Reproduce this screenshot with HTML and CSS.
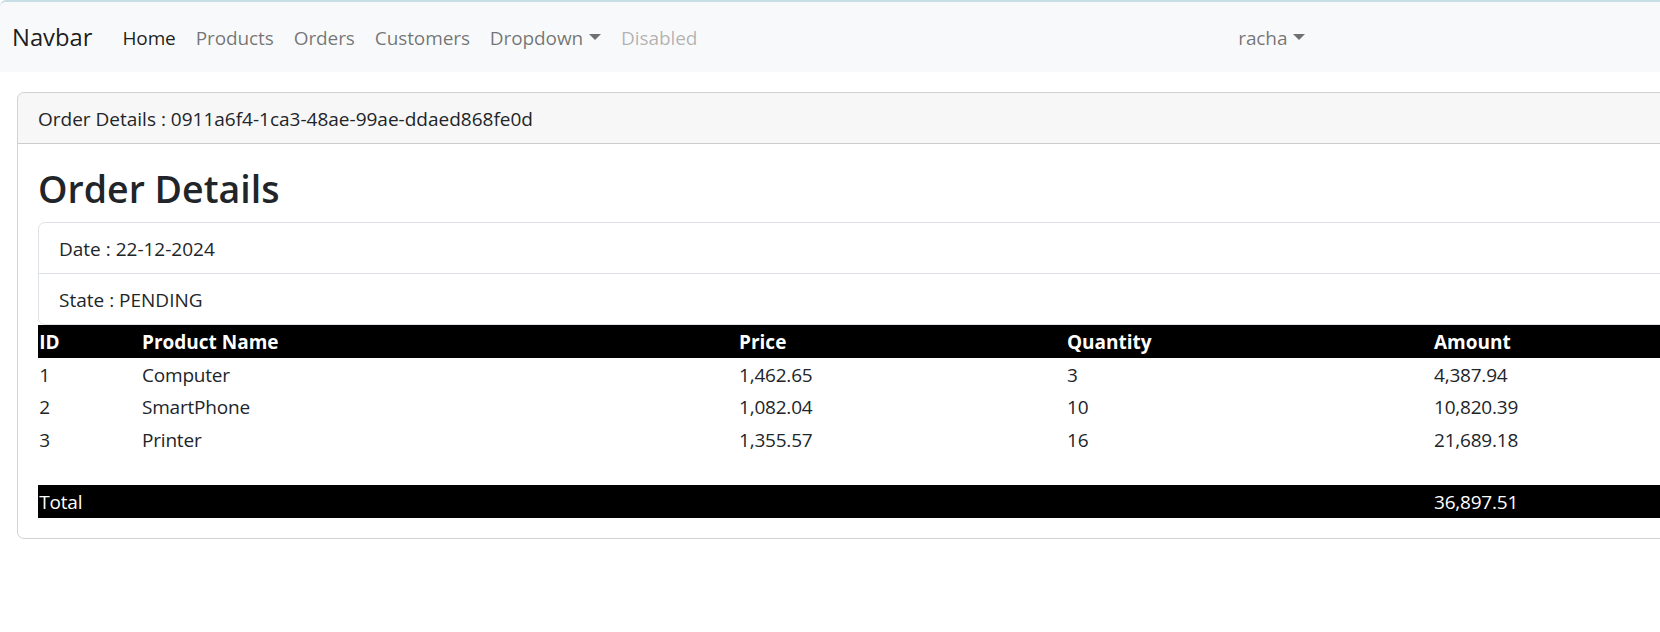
FILE: index.html
```html
<!DOCTYPE html>
<html lang="en">
<head>
<meta charset="utf-8">
<title>Order Details</title>
<link rel="stylesheet" href="styles.css">
</head>
<body>
<nav class="navbar">
  <a class="brand" href="#">Navbar</a>
  <ul class="nav">
    <li><a class="nav-link active" href="#">Home</a></li>
    <li><a class="nav-link" href="#">Products</a></li>
    <li><a class="nav-link" href="#">Orders</a></li>
    <li><a class="nav-link" href="#">Customers</a></li>
    <li><a class="nav-link dropdown-toggle" href="#">Dropdown</a></li>
    <li><a class="nav-link disabled" href="#">Disabled</a></li>
  </ul>
  <ul class="nav user-nav">
    <li><a class="nav-link dropdown-toggle" href="#">racha</a></li>
  </ul>
</nav>

<div class="card">
  <div class="card-header">Order Details : 0911a6f4-1ca3-48ae-99ae-ddaed868fe0d</div>
  <div class="card-body">
    <h1 class="title">Order Details</h1>
    <ul class="list-group">
      <li class="list-item">Date : 22-12-2024</li>
      <li class="list-item">State : PENDING</li>
    </ul>
    <table class="items">
      <colgroup>
        <col class="c-id"><col class="c-name"><col class="c-price"><col class="c-qty"><col class="c-amount">
      </colgroup>
      <thead>
        <tr class="dark"><th>ID</th><th>Product Name</th><th>Price</th><th>Quantity</th><th>Amount</th></tr>
      </thead>
      <tbody>
        <tr><td>1</td><td>Computer</td><td>1,462.65</td><td>3</td><td>4,387.94</td></tr>
        <tr><td>2</td><td>SmartPhone</td><td>1,082.04</td><td>10</td><td>10,820.39</td></tr>
        <tr><td>3</td><td>Printer</td><td>1,355.57</td><td>16</td><td>21,689.18</td></tr>
        <tr class="spacer"><td colspan="5"></td></tr>
      </tbody>
      <tfoot>
        <tr class="dark total"><td>Total</td><td></td><td></td><td></td><td>36,897.51</td></tr>
      </tfoot>
    </table>
  </div>
</div>
</body>
</html>
```

FILE: styles.css
```css
* { box-sizing: border-box; }

html, body {
  margin: 0;
  overflow: hidden;
}

body {
  font-family: "Open Sans", "Noto Sans", sans-serif;
  font-size: 19px;
  line-height: 30px;
  color: #212529;
  background: #fff;
}

a { text-decoration: none; }

.navbar {
  display: flex;
  align-items: center;
  height: 72px;
  padding: 11px 12px 9px;
  background: #f8f9fa;
  border-top: 2px solid #c8dee5;
  border-top-left-radius: 6px;
}

.brand {
  font-size: 23.75px;
  line-height: 37.5px;
  padding: 6.25px 0;
  margin-right: 20px;
  color: rgba(0, 0, 0, 0.9);
}

.nav {
  display: flex;
  list-style: none;
  margin: 0;
  padding: 0;
}

.nav-link {
  display: block;
  padding: 10px;
  font-size: 19px;
  letter-spacing: -0.1px;
  line-height: 30px;
  color: rgba(0, 0, 0, 0.55);
}

.nav-link.active { color: rgba(0, 0, 0, 0.9); }
.nav-link.disabled { color: rgba(0, 0, 0, 0.3); }

.dropdown-toggle::after {
  content: "";
  display: inline-block;
  margin-left: 6px;
  vertical-align: 5px;
  border-top: 6px solid;
  border-right: 6px solid transparent;
  border-left: 6px solid transparent;
  border-bottom: 0;
}

.user-nav { margin-left: 521px; }

.card {
  width: 1800px;
  margin: 20px 0 0 17px;
  border: 1px solid rgba(0, 0, 0, 0.175);
  border-radius: 7px;
}

.card-header {
  padding: 11px 20px 9px;
  background: rgba(0, 0, 0, 0.03);
  border-bottom: 1px solid rgba(0, 0, 0, 0.175);
  border-radius: 6px 6px 0 0;
}

.card-body { padding: 20px; }

.title {
  margin: 0 0 10px;
  padding-top: 1px;
  height: 48px;
  font-size: 37.5px;
  line-height: 48px;
  font-weight: 600;
  color: #212529;
}

.list-group {
  list-style: none;
  margin: 0;
  padding: 0;
  border: 1px solid #dee2e6;
  border-radius: 7px;
}

.list-item { padding: 11px 20px 9px; }
.list-item + .list-item { border-top: 1px solid #dee2e6; }

.items {
  width: 100%;
  table-layout: fixed;
  border-collapse: collapse;
}

.c-id { width: 102.75px; }
.c-name { width: 597px; }
.c-price { width: 328px; }
.c-qty { width: 367px; }

.items th, .items td {
  padding: 2.25px 1.25px 0.25px;
  text-align: left;
  vertical-align: middle;
  line-height: 30px;
}

.items td { letter-spacing: -0.2px; }

.items th { font-weight: 700; }

.dark {
  background: #000;
  color: #fff;
}

.spacer td { height: 30px; padding: 0; }
```
